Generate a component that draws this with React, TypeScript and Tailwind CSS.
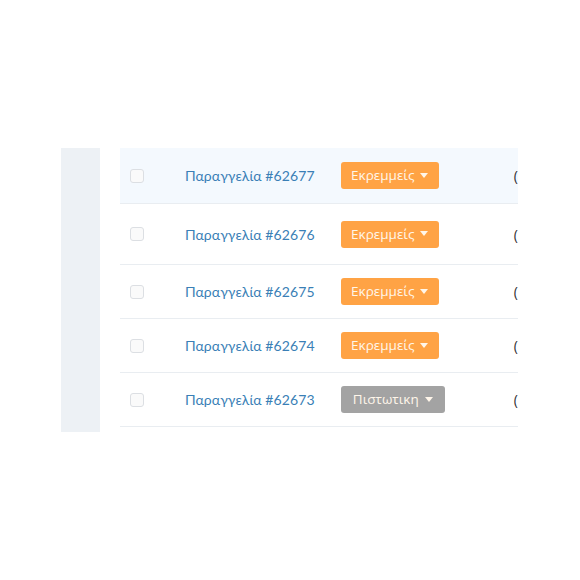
const orders = [
  { id: 62677, status: "Εκρεμμείς", tone: "orange", active: true, h: "h-[56px]" },
  { id: 62676, status: "Εκρεμμείς", tone: "orange", active: false, h: "h-[61px]" },
  { id: 62675, status: "Εκρεμμείς", tone: "orange", active: false, h: "h-[54px]" },
  { id: 62674, status: "Εκρεμμείς", tone: "orange", active: false, h: "h-[54px]" },
  { id: 62673, status: "Πιστωτικη", tone: "gray", active: false, h: "h-[54px]" },
];

function StatusBadge({ label, tone }: { label: string; tone: string }) {
  const color = tone === "orange" ? "bg-[#ffa345] w-[99px]" : "bg-[#a3a3a3] w-[105px]";
  return (
    <span
      className={`inline-flex h-[27px] items-center justify-center gap-[6px] rounded-[3px] text-[13.5px] text-[#fff6ea] ${color}`}
    >
      {label}
      <svg width="8" height="5" viewBox="0 0 8 5" className="mb-[1px]">
        <path d="M0 0h8L4 5z" fill="currentColor" />
      </svg>
    </span>
  );
}

export default function App() {
  return (
    <div className="min-h-[580px] bg-white pt-[148px] pl-[61px]" style={{ fontFamily: '"Open Sans", sans-serif' }}>
      <div className="flex">
        <div className="h-[284px] w-[39px] bg-[#edf1f5]" />
        <div className="ml-[20px] w-[398px] overflow-hidden">
          {orders.map((o) => (
            <div
              key={o.id}
              className={`flex items-center border-b border-[#e9edf1] whitespace-nowrap ${o.h} ${o.active ? "bg-[#f4f9fe]" : ""}`}
            >
              <span className="ml-[10px] h-[14px] w-[14px] rounded-[3px] border border-[#dcdfe3] bg-[#fafafa]" />
              <a className="ml-[41px] w-[157px] text-[14px] tracking-[0.1px] text-[#3a7fb6]" style={{ fontFamily: "Lato, sans-serif" }}>
                Παραγγελία #{o.id}
              </a>
              <StatusBadge label={o.status} tone={o.tone} />
              <span className={`${o.tone === "orange" ? "ml-[75px]" : "ml-[69px]"} text-[14px] text-[#333]`}>(</span>
            </div>
          ))}
        </div>
      </div>
    </div>
  );
}
